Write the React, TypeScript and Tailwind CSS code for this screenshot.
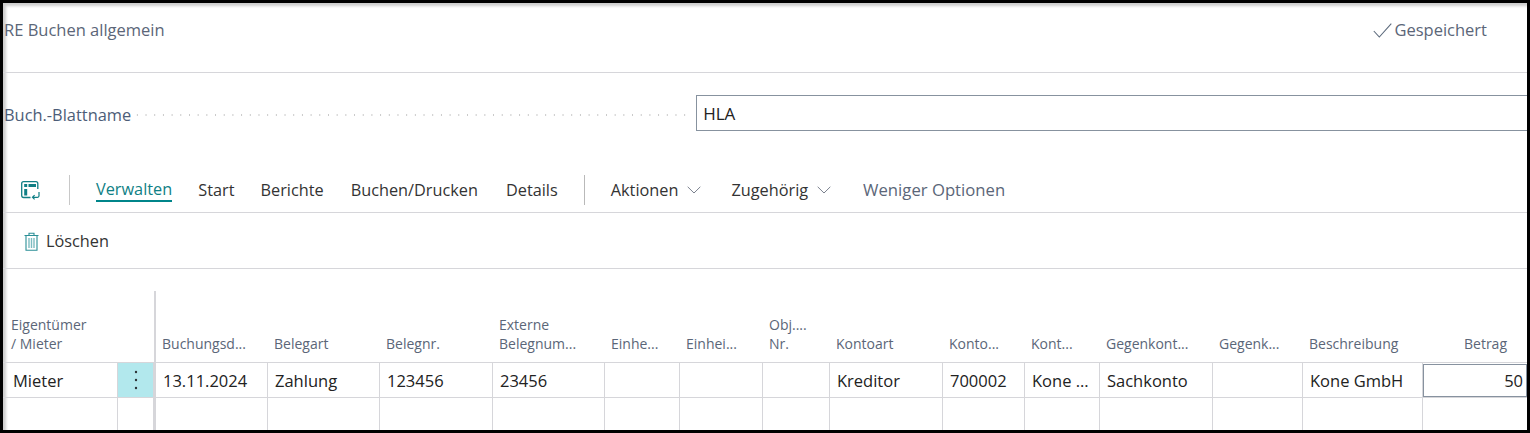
import React from "react";

const FONT = "[font-family:'Open_Sans','Noto_Sans',sans-serif]";

const COLS = [
  { head: "Eigentümer\n/ Mieter", value: "Mieter", w: 115 },
  { head: "", value: "", w: 36, menu: true },
  { head: "Buchungsd...", value: "13.11.2024", w: 114 },
  { head: "Belegart", value: "Zahlung", w: 112 },
  { head: "Belegnr.", value: "123456", w: 113 },
  { head: "Externe\nBelegnum...", value: "23456", w: 112 },
  { head: "Einhe...", value: "", w: 75 },
  { head: "Einhei...", value: "", w: 83 },
  { head: "Obj....\nNr.", value: "", w: 67 },
  { head: "Kontoart", value: "Kreditor", w: 113 },
  { head: "Konto...", value: "700002", w: 82 },
  { head: "Kont...", value: "Kone ...", w: 75 },
  { head: "Gegenkont...", value: "Sachkonto", w: 113 },
  { head: "Gegenk...", value: "", w: 90 },
  { head: "Beschreibung", value: "Kone GmbH", w: 120 },
  { head: "Betrag", value: "50", w: 104, right: true },
];

function LayoutIcon() {
  return (
    <svg width="20" height="19" viewBox="0 0 20 19" fill="none" stroke="#0f7f85" strokeWidth="1.3">
      <path d="M9.5 16.5H2.6A1.9 1.9 0 0 1 .7 14.6V2.6A1.9 1.9 0 0 1 2.6.7h12.3a1.9 1.9 0 0 1 1.9 1.9V8" />
      <rect x="3.2" y="3" width="3" height="3" fill="#0f7f85" stroke="none" />
      <rect x="7.5" y="3" width="7.5" height="3" fill="#0f7f85" stroke="none" />
      <rect x="3.2" y="8" width="3" height="6.5" fill="#0f7f85" stroke="none" />
      <path d="M18 11v3.7a1.6 1.6 0 0 1-1.6 1.6H11.5M13.6 14.2l-2.1 2.1 2.1 2.1" strokeWidth="1.2" />
    </svg>
  );
}

function TrashIcon() {
  return (
    <svg width="15" height="19" viewBox="0 0 15 19" fill="none" stroke="#2b8f96" strokeWidth="1.1">
      <path d="M.5 3.5h14M5 3.5V1.2h5v2.3M2 3.5v14.8h11V3.5" />
      <path d="M5 6v10M7.5 6v10M10 6v10" strokeWidth="1.4" stroke="#7dbcc1" />
    </svg>
  );
}

function Chevron() {
  return (
    <svg width="14" height="8" viewBox="0 0 14 8" fill="none" stroke="#6b7280" strokeWidth="0.9">
      <path d="M.7.8 7 7l6.3-6.2" />
    </svg>
  );
}

function Check() {
  return (
    <svg width="19" height="15" viewBox="0 0 19 15" fill="none" stroke="#5d6b7d" strokeWidth="1.1">
      <path d="M.8 8 6.3 14 18.3.7" />
    </svg>
  );
}

function Dots() {
  return (
    <svg width="4" height="20" viewBox="0 0 4 20" fill="#2f3437">
      <circle cx="2" cy="2" r="1.2" />
      <circle cx="2" cy="10" r="1.2" />
      <circle cx="2" cy="18" r="1.2" />
    </svg>
  );
}

export default function App() {
  return (
    <div className={`${FONT} w-[1530px] h-[433px] overflow-hidden bg-white border-[3px] border-black shadow-[inset_3px_3px_3px_rgba(0,0,0,0.2)]`}>
      <div className="h-[70px] flex items-center justify-between border-b border-[#d6d6da] pb-[14px] pl-[1px] pr-[40px] text-[16.5px] text-[#5b6678]">
        <span>RE Buchen allgemein</span>
        <span className="flex items-center gap-[2px]">
          <Check />
          Gespeichert
        </span>
      </div>

      <div className="h-[71px] flex items-center pt-[8px] pl-[1px]">
        <span className="pt-[5px] text-[16.4px] text-[#4d5d78]">Buch.-Blattname</span>
        <div className="w-[557px] h-[2px] mt-[5px] ml-[2px] bg-[radial-gradient(circle,#c8c8c8_1px,transparent_1px)] bg-[length:8.7px_2px]" />
        <div className="ml-[6px] flex-1 h-[36px] border border-[#87929f] border-r-0 flex items-center px-[6px] pt-[2px] text-[17px] text-[#222]">
          HLA
        </div>
      </div>

      <div className="h-[69px] flex items-center border-b border-[#d6d6da] pt-[24px] pl-[18px] text-[16.3px] text-[#333]">
        <LayoutIcon />
        <div className="w-px h-[30px] bg-[#c8c8c8] ml-[28px] mr-[26px]" />
        <span className="text-[#0f7f85] border-b-2 border-[#00858a] leading-[22px] mr-[26px]">Verwalten</span>
        <span className="mr-[26px]">Start</span>
        <span className="mr-[27px]">Berichte</span>
        <span className="mr-[28px]">Buchen/Drucken</span>
        <span>Details</span>
        <div className="w-px h-[30px] bg-[#b9b9b9] ml-[26px] mr-[26px]" />
        <span>Aktionen</span>
        <span className="ml-[9px] mr-[30px]"><Chevron /></span>
        <span>Zugehörig</span>
        <span className="ml-[9px] mr-[32px]"><Chevron /></span>
        <span className="text-[16.7px] text-[#5b6678]">Weniger Optionen</span>
      </div>

      <div className="h-[56px] flex items-center border-b border-[#d6d6da] pt-[2px] pl-[21px] text-[16.3px] text-[#333]">
        <TrashIcon />
        <span className="ml-[7px]">Löschen</span>
      </div>

      <div className="mt-[22px] flex">
        {COLS.map((c, i) => (
          <div
            key={i}
            className={`shrink-0 flex flex-col ${i === 2 ? "border-l-2 border-[#d6d6da]" : ""}`}
            style={{ width: c.w }}
          >
            <div className={`h-[71px] flex items-end pb-[9px] text-[14px] leading-[19px] text-[#5b6678] whitespace-pre-line ${c.right ? "justify-end pr-[20px]" : i === 0 ? "pl-[8px]" : "pl-[6px]"}`}>
              {c.head}
            </div>
            <div className={`relative h-[36px] flex items-center border-t border-b border-[#d6d6da] text-[16.5px] text-[#222] ${i === COLS.length - 1 ? "" : "border-r"} ${c.menu ? "bg-[#b2e8ed] justify-center" : i === 0 ? "pl-[10px] pt-[3px]" : c.right ? "" : "pl-[7px] pt-[3px]"}`}>
              {c.menu && <Dots />}
              {c.right ? (
                <div className="w-full h-[33px] border border-[#87929f] flex items-center justify-end pr-[3px] pt-[3px]">{c.value}</div>
              ) : (
                !c.menu && c.value
              )}
            </div>
            <div className={`h-[40px] border-[#d6d6da] ${i === COLS.length - 1 ? "" : "border-r"}`} />
          </div>
        ))}
      </div>
    </div>
  );
}
